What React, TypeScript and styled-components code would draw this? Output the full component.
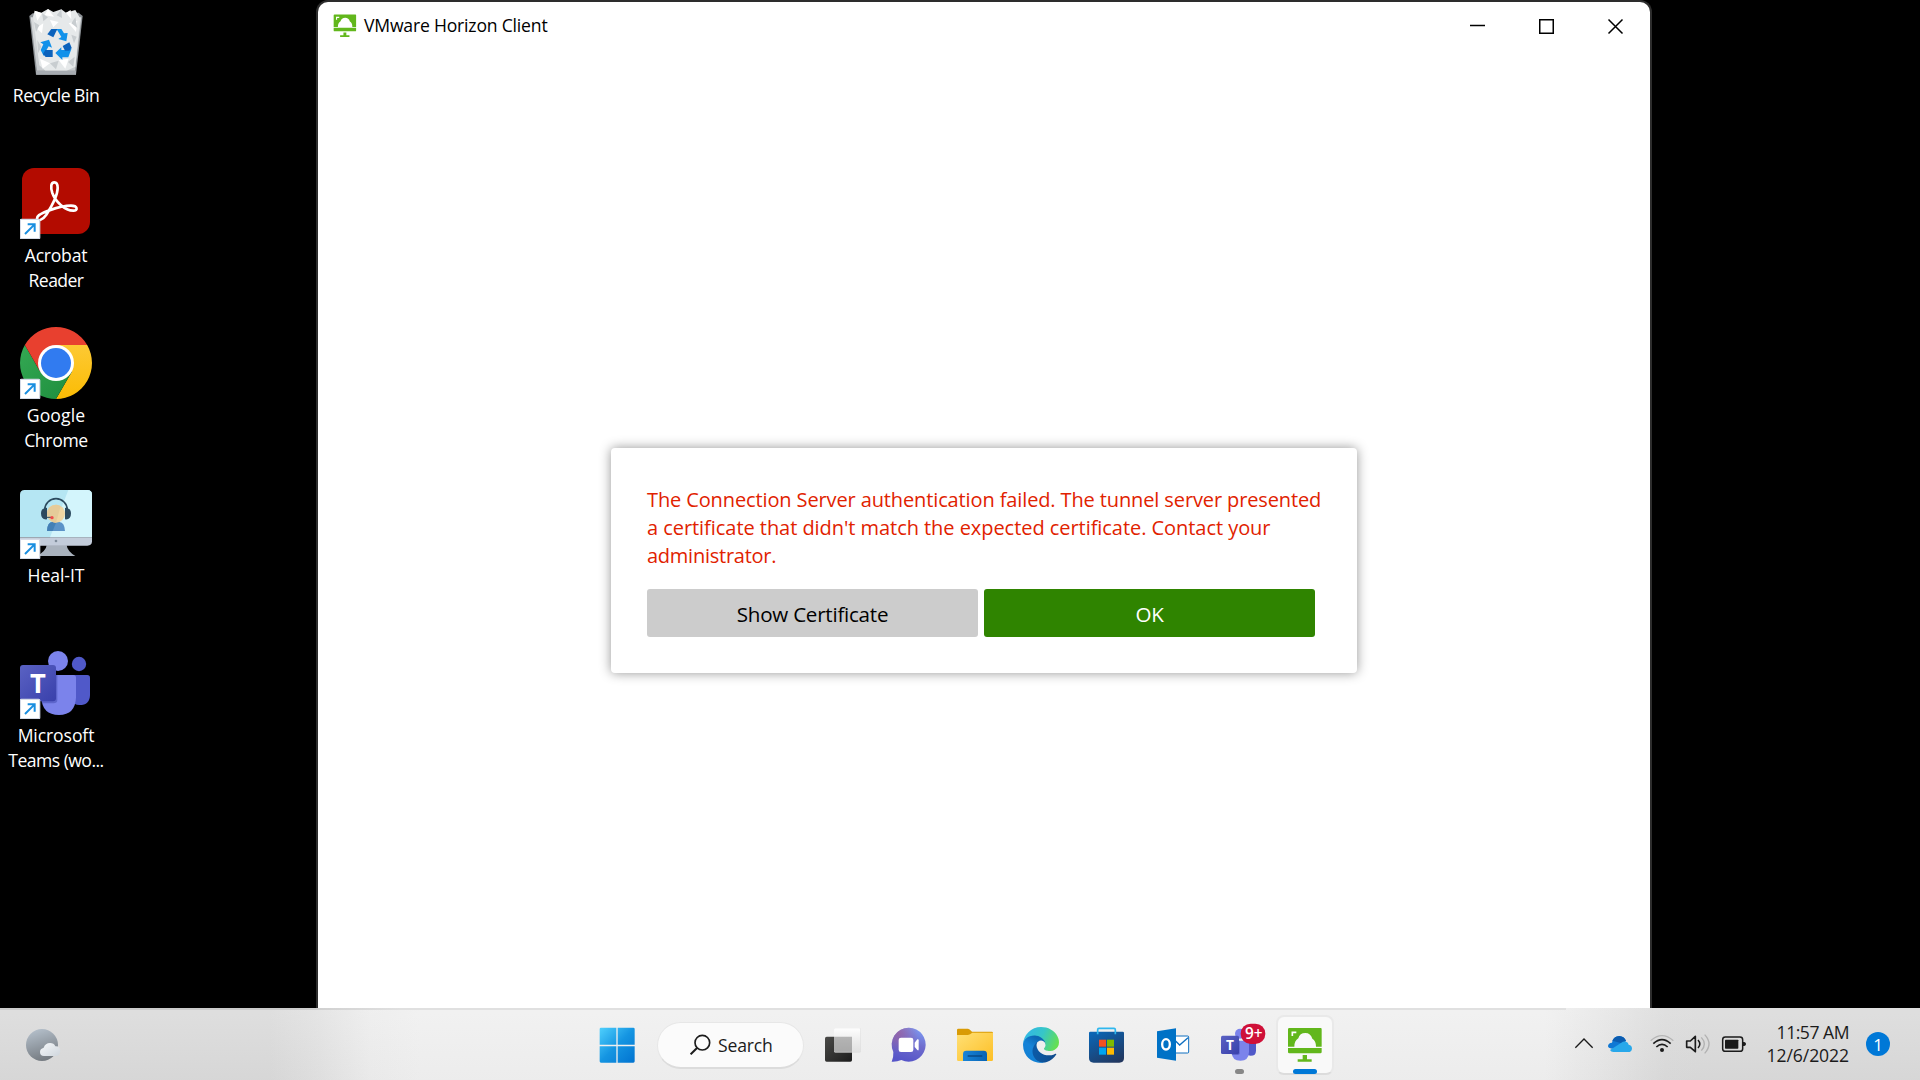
import React from 'react';
import styled, { createGlobalStyle } from 'styled-components';

const GlobalStyle = createGlobalStyle`
  *, *::before, *::after { box-sizing: border-box; }
  body { margin: 0; background: #000; overflow: hidden; }
  body, button { font-family: 'Open Sans', 'Noto Sans', sans-serif; }
  svg { display: block; }
`;

const Screen = styled.div`
  display: flex;
  flex-direction: column;
  width: 1920px;
  height: 1080px;
  background: #000;
`;

const Desktop = styled.main`
  display: flex;
  height: 1008px;
`;

const Shortcuts = styled.nav`
  display: grid;
  grid-auto-rows: 160px;
  align-content: start;
  width: 112px;
  margin-right: 204px;
`;

const Shortcut = styled.div`
  display: flex;
  flex-direction: column;
  align-items: center;
  padding-top: 7px;
`;

const ShortcutIcon = styled.svg`
  width: 72px;
  height: 72px;
  flex: none;
`;

const ShortcutLabel = styled.div`
  display: flex;
  flex-direction: column;
  align-items: center;
  margin-top: 4px;
`;

const LabelLine = styled.span<{ $spacing: number }>`
  font-size: 17.6px;
  line-height: 25px;
  letter-spacing: ${(p) => p.$spacing}px;
  color: #fff;
  white-space: nowrap;
`;

const Window = styled.section`
  display: flex;
  flex-direction: column;
  align-items: center;
  width: 1336px;
  height: 1008px;
  border: 2px solid #2d2d2d;
  border-bottom: 0;
  border-radius: 12px 12px 0 0;
  background: #fff;
`;

const TitleBar = styled.header`
  display: flex;
  align-items: center;
  align-self: stretch;
  height: 48px;
  padding-left: 15px;
`;

const TitleIcon = styled.svg`
  width: 24px;
  height: 24px;
`;

const Title = styled.span`
  flex: 1;
  margin: -2px 0 0 7px;
  font-size: 17.6px;
  letter-spacing: -0.2px;
  color: #000;
`;

const Caption = styled.svg`
  width: 69px;
  height: 48px;
`;

const Dialog = styled.div`
  width: 746px;
  height: 225px;
  margin-top: 398px;
  padding: 38px 42px 36px 36px;
  border-radius: 4px;
  background: #fff;
  box-shadow: 0 0 12px rgba(0, 0, 0, 0.42);
`;

const Message = styled.div`
  display: flex;
  flex-direction: column;
  align-items: flex-start;
`;

const MessageLine = styled.span<{ $spacing: number }>`
  font-size: 20px;
  line-height: 28px;
  letter-spacing: ${(p) => p.$spacing}px;
  color: #e12200;
  white-space: nowrap;
`;

const Actions = styled.div`
  display: grid;
  grid-template-columns: 331px 331px;
  column-gap: 6px;
  margin-top: 19px;
`;

const ActionButton = styled.button<{ $primary?: boolean }>`
  height: 48px;
  padding: 2px 0 0;
  border: 0;
  border-radius: 3px;
  font-size: 20.6px;
  letter-spacing: -0.25px;
  background: ${(p) => (p.$primary ? '#2f8400' : '#ccc')};
  color: ${(p) => (p.$primary ? '#fff' : '#000')};
`;

const Taskbar = styled.footer`
  display: grid;
  grid-template-columns: 584px 754px 1fr;
  height: 72px;
  background:
    linear-gradient(90deg, #cbcbcb 290px, #e0e0e0 400px, #e0e0e0 1566px, transparent 1566px) top / 100% 2px no-repeat,
    linear-gradient(180deg, rgba(255, 255, 255, 0.15), rgba(0, 0, 0, 0.012)),
    linear-gradient(90deg, #d9d9d9 270px, #e0e0e0 315px, #ececec 370px, #efefef 420px, #efefef 1545px, #e6e6e6 1600px, #dadada 1665px, #d9d9d9 1700px);
`;

const Weather = styled.svg`
  width: 36px;
  height: 36px;
  margin: 20px 0 0 25px;
`;

const Apps = styled.div`
  display: flex;
  align-items: center;
`;

const Slot = styled.div`
  display: flex;
  justify-content: center;
  width: 66px;
`;

const AppIcon = styled.svg`
  width: 36px;
  height: 36px;
  margin-top: 1px;
  overflow: visible;
`;

const BadgedIcon = styled.svg`
  width: 44px;
  height: 44px;
  margin: 1px 0 0 8px;
  overflow: visible;
`;

const ActiveTile = styled.div`
  display: flex;
  flex-direction: column;
  align-items: center;
  justify-content: space-between;
  width: 58px;
  height: 60px;
  margin-top: 2px;
  padding-top: 10px;
  border: 2px solid #e9e9e9;
  border-bottom-color: #dcdcdc;
  border-radius: 8px;
  background: #f9f9f9;
`;

const RunningTile = styled.div`
  display: flex;
  flex-direction: column;
  align-items: center;
  justify-content: space-between;
  height: 60px;
  margin-top: 2px;
  padding: 8px 0 1px;
`;

const Indicator = styled.i<{ $active?: boolean }>`
  width: ${(p) => (p.$active ? 24 : 9)}px;
  height: 5px;
  margin-bottom: ${(p) => (p.$active ? -1 : 0)}px;
  border-radius: 3px;
  background: ${(p) => (p.$active ? '#0078d7' : '#878787')};
`;

const SearchPill = styled.div`
  display: flex;
  align-items: center;
  width: 147px;
  height: 47px;
  margin: 2px 6px 0 7px;
  padding-left: 32px;
  border: 1px solid #e7e7e7;
  border-bottom: 2px solid #dcdcdc;
  border-radius: 24px;
  background: #fbfbfb;
`;

const SearchIcon = styled.svg`
  width: 22px;
  height: 22px;
`;

const SearchText = styled.span`
  margin: 1px 0 0 6px;
  font-size: 17.6px;
  letter-spacing: -0.2px;
  color: #1b1b1b;
`;

const Tray = styled.div`
  display: flex;
  align-items: center;
  justify-content: flex-end;
  padding-right: 30px;
`;

const TrayIcon = styled.svg<{ $gap: number }>`
  width: 24px;
  height: 24px;
  margin-right: ${(p) => p.$gap}px;
  overflow: visible;
`;

const Clock = styled.div`
  display: flex;
  flex-direction: column;
  align-items: flex-end;
  width: 103px;
  margin-right: 17px;
`;

const ClockLine = styled.span<{ $spacing: number }>`
  font-size: 17.6px;
  line-height: 23px;
  letter-spacing: ${(p) => p.$spacing}px;
  color: #1b1b1b;
`;

const Notice = styled.div`
  display: flex;
  align-items: center;
  justify-content: center;
  width: 24px;
  height: 24px;
  border-radius: 50%;
  font-size: 17px;
  background: #0078d7;
  color: #fff;
`;

const LinkArrow = () => (
  <g>
    <rect x="1" y="157" width="58" height="58" rx="3" fill="#fff" stroke="#d5dae6" strokeWidth="4" />
    <path d="M15 201 43 173M23 172H44V194" fill="none" stroke="#1a8ee0" strokeWidth="6" />
  </g>
);

const RecycleBinIcon = () => (
  <ShortcutIcon viewBox="60 21 216 216">
    <defs>
      <linearGradient id="bin" x1="0" x2="0" y1="0" y2="1">
        <stop offset="0" stopColor="#d9dcde" />
        <stop offset="1" stopColor="#c6cacd" />
      </linearGradient>
    </defs>
    <path d="M88 48 108 224H228L248 48 236 38 98 40Z" fill="#8f9498" />
    <path d="M92 52 111 212H225L244 52Z" fill="url(#bin)" />
    <path d="M99 50 104 32 124 38 144 27 160 36 184 28 198 38 226 30 240 54 226 200 200 212H136L118 196Z" fill="#e6e9ea" />
    <path d="M104 32 126 40 112 62ZM144 27 162 50 134 46ZM198 38 212 30 214 58ZM108 84 130 70 126 100ZM206 70 232 62 228 96ZM120 176 150 190 128 206ZM176 180 206 176 196 206ZM150 60 176 66 160 82Z" fill="#fff" />
    <path d="M126 40 144 52 130 64ZM184 28 186 54 170 46ZM226 52 232 84 214 70ZM112 120 124 140 114 160ZM150 190 176 182 168 208ZM204 186 224 170 220 200ZM102 66 118 76 108 96ZM214 104 230 110 222 130Z" fill="#c8cdd0" />
    <path d="M108 212H228V224H109Z" fill="#a6abb1" />
    <path d="M154 87H184L192 100 203 99 199 124 175 117 184 111 172 91Z" fill="#1191ea" />
    <path d="M154 87H172L160 112 142 103Z" fill="#0b62bc" />
    <path d="M121 127 147 119 156 143 146 139 136 156 131 168 122 150 130 133Z" fill="#1191ea" />
    <path d="M136 150H158V171H137L129 162Z" fill="#0b62bc" />
    <path d="M166 159 184 142V150H206L215 145 205 172H187V180Z" fill="#1191ea" />
    <path d="M188 138 208 127 215 143 208 152H195Z" fill="#0b62bc" />
  </ShortcutIcon>
);

const AcrobatIcon = () => (
  <ShortcutIcon viewBox="60 501 216 216">
    <rect x="66" y="504" width="204" height="198" rx="36" fill="#b30b00" />
    <path
      d="M163 547C153 547 151 560 157 579C166 604 194 632 220 632C235 632 233 617 213 617C181 617 110 640 111 655C112 666 128 660 139 644C155 619 173 590 173 564C173 552 169 547 163 547Z"
      fill="none"
      stroke="#fff"
      strokeWidth="8"
    />
    <g transform="translate(60 501)"><LinkArrow /></g>
  </ShortcutIcon>
);

const ChromeIcon = () => (
  <ShortcutIcon viewBox="60 51 216 216">
    <defs>
      <linearGradient id="cy" x1="0" x2="0" y1="0" y2="1">
        <stop offset="0" stopColor="#fdc934" />
        <stop offset="1" stopColor="#fbbc04" />
      </linearGradient>
      <linearGradient id="cg" x1="0" x2="1" y1="0" y2="1">
        <stop offset="0" stopColor="#34a853" />
        <stop offset="1" stopColor="#1e8e3e" />
      </linearGradient>
    </defs>
    <path d="M168 105H261.500A108 108 0 0 1 168 267L215 186Z" fill="url(#cy)" />
    <path d="M74.500 105A108 108 0 0 0 168 267L214.800 186 168 159 121 186Z" fill="url(#cg)" />
    <path d="M74.500 105A108 108 0 0 1 261.500 105H168L121.200 186Z" fill="#e8402f" />
    <circle cx="168" cy="159" r="54" fill="#fff" />
    <circle cx="168" cy="159" r="45" fill="#317bf0" />
    <g transform="translate(60 51)"><LinkArrow /></g>
  </ShortcutIcon>
);

const HealItIcon = () => (
  <ShortcutIcon viewBox="60 531 216 216">
    <path d="M140 706H200Q202 724 226 738H110Q138 724 140 706Z" fill="#a9b2bd" />
    <path d="M74 540H262Q276 540 276 554V682H60V554Q60 540 74 540Z" fill="#b5e6f3" />
    <path d="M205 540H262Q276 540 276 554V682H150Z" fill="#d3f5fc" />
    <path d="M60 682H276V694Q276 707 262 707H74Q60 707 60 694Z" fill="#c3ccda" />
    <circle cx="168" cy="693" r="4" fill="#7f8c9b" />
    <path d="M141 663Q142 636 158 636H178Q194 638 195 663Z" fill="#5b93c8" />
    <path d="M141 663Q142 636 158 636H169L158 663Z" fill="#4380b6" />
    <circle cx="168" cy="611" r="27" fill="#efd5a2" />
    <path d="M182 588A27 27 0 1 0 168 638Z" fill="#e5cb99" />
    <path d="M134 600A34 34 0 0 1 202 600" fill="none" stroke="#2c4a5e" strokeWidth="5" />
    <path d="M141 593V628Q123 630 123 610 123 594 141 593ZM195 593V628Q213 630 213 610 213 594 195 593Z" fill="#2c4a5e" />
    <path d="M138 622H154" stroke="#2c4a5e" strokeWidth="3" />
    <circle cx="156" cy="623" r="5" fill="#f04b4b" />
    <g transform="translate(60 531)"><LinkArrow /></g>
  </ShortcutIcon>
);

const TeamsShapes = ({ id }: { id: string }) => (
  <g>
    <defs>
      <linearGradient id={id} x1="0" x2="1" y1="0" y2="1">
        <stop offset="0" stopColor="#5a62c3" />
        <stop offset="1" stopColor="#3940ab" />
      </linearGradient>
    </defs>
    <circle cx="237" cy="192" r="21.500" fill="#5059c9" />
    <path d="M210 225H262Q270 225 270 233V284Q270 315 238 315 222 315 212 300Z" fill="#5059c9" />
    <circle cx="174" cy="183" r="30" fill="#7b83eb" />
    <path d="M126 225H220Q228 225 228 233V292Q226 345 177 345 126 345 124 292Z" fill="#7b83eb" />
    <path d="M126 225H172V300Q172 310 160 310H125Z" fill="#4a51b5" opacity="0.6" />
    <rect x="60" y="195" width="108" height="109" rx="9" fill={`url(#${id})`} />
    <text x="114" y="278" textAnchor="middle" fill="#fff" fontSize="82" fontWeight="700" fontFamily="Open Sans">T</text>
  </g>
);

const TeamsIcon = () => (
  <ShortcutIcon viewBox="60 141 216 216">
    <TeamsShapes id="teamsDesktop" />
    <g transform="translate(60 141)"><LinkArrow /></g>
  </ShortcutIcon>
);

const HorizonShapes = () => (
  <g>
    <path d="M1048 84H1142Q1145 84 1145 88V140H1128Q1128 122 1117 116 1112 99 1096 99 1079 99 1075 115 1063 122 1063 140H1044V88Q1044 84 1048 84Z" fill="#62b71c" />
    <path d="M1057 108V97H1069" fill="none" stroke="#fff" strokeWidth="5" />
    <path d="M1044 144H1145V156Q1145 160 1141 160H1048Q1044 160 1044 156ZM1088 165H1101V178H1115V185H1073V178H1088Z" fill="#62b71c" />
  </g>
);

const StartIcon = () => (
  <AppIcon viewBox="58 82 108 108">
    <defs>
      <linearGradient id="win" gradientUnits="userSpaceOnUse" x1="60" y1="84" x2="164" y2="189">
        <stop offset="0" stopColor="#4fd0fd" />
        <stop offset="0.5" stopColor="#1595e2" />
        <stop offset="1" stopColor="#0173d0" />
      </linearGradient>
    </defs>
    <path d="M64 84H110V135H60V88Q60 84 64 84ZM114 84H161Q165 84 165 88V135H114ZM60 140H110V189H64Q60 189 60 185ZM114 140H165V185Q165 189 161 189H114Z" fill="url(#win)" />
  </AppIcon>
);

const TaskViewIcon = () => (
  <AppIcon viewBox="735 82 108 108">
    <defs>
      <linearGradient id="tv" x1="0" x2="1" y1="0" y2="1">
        <stop offset="0" stopColor="#4a4a48" />
        <stop offset="1" stopColor="#1c1c1c" />
      </linearGradient>
      <linearGradient id="tvf" x1="0" x2="0" y1="0" y2="1">
        <stop offset="0" stopColor="#fff" stopOpacity="0.95" />
        <stop offset="1" stopColor="#e2e2e2" stopOpacity="0.75" />
      </linearGradient>
    </defs>
    <rect x="735" y="111" width="81" height="75" rx="5" fill="url(#tv)" />
    <rect x="762" y="86" width="81" height="73" rx="4" fill="#dcdcdc" opacity="0.8" />
    <rect x="762" y="86" width="79" height="70" rx="4" fill="url(#tvf)" />
    <path d="M762 111H816V156H766Q762 156 762 152Z" fill="#777" opacity="0.48" />
  </AppIcon>
);

const ChatIcon = () => (
  <AppIcon viewBox="931 82 108 108">
    <defs>
      <linearGradient id="chat" x1="0.8" x2="0.5" y1="0" y2="1">
        <stop offset="0" stopColor="#7d9df5" />
        <stop offset="0.5" stopColor="#6f6ccd" />
        <stop offset="1" stopColor="#5655c8" />
      </linearGradient>
      <radialGradient id="chatGlow" cx="0.2" cy="0.15" r="0.6">
        <stop offset="0" stopColor="#9d5c98" stopOpacity="0.75" />
        <stop offset="1" stopColor="#9d5c98" stopOpacity="0" />
      </radialGradient>
    </defs>
    <path d="M985 84A51 51 0 1 1 962 181Q948 187 933 186 939 174 938 157A51 51 0 0 1 985 84Z" fill="url(#chat)" />
    <path d="M985 84A51 51 0 1 1 962 181Q948 187 933 186 939 174 938 157A51 51 0 0 1 985 84Z" fill="url(#chatGlow)" />
    <rect x="954" y="114" width="44" height="43" rx="7" fill="#fff" />
    <path d="M1002 129 1010 119Q1014 117 1014 122V149Q1014 154 1010 151L1002 142Z" fill="#fff" />
  </AppIcon>
);

const FolderIcon = () => (
  <AppIcon viewBox="51 82 108 108">
    <defs>
      <linearGradient id="fold" x1="0" x2="1" y1="0" y2="1">
        <stop offset="0" stopColor="#ffe076" />
        <stop offset="1" stopColor="#fdbf25" />
      </linearGradient>
      <linearGradient id="foldBlue" x1="0" x2="1" y1="0" y2="0">
        <stop offset="0" stopColor="#1a85d8" />
        <stop offset="1" stopColor="#0863b4" />
      </linearGradient>
    </defs>
    <path d="M55 87H84Q88 87 96 96H155Q159 96 159 100V130H51V91Q51 87 55 87Z" fill="#d99b05" />
    <path d="M51 106H84Q90 105 97 99H159V180Q159 184 155 184H55Q51 184 51 180Z" fill="url(#fold)" />
    <path d="M69 184V163Q69 153 79 153H131Q141 153 141 163V184Z" fill="url(#foldBlue)" />
    <path d="M83 169H127" stroke="#08457f" strokeWidth="4" />
  </AppIcon>
);

const EdgeIcon = () => (
  <AppIcon viewBox="0 0 256 256">
    <defs>
      <linearGradient id="e1" x1="0.2" x2="1" y1="0.5" y2="0.6">
        <stop offset="0" stopColor="#0c59a4" />
        <stop offset="1" stopColor="#114a8b" />
      </linearGradient>
      <linearGradient id="e2" x1="0.7" x2="0.3" y1="0.2" y2="1">
        <stop offset="0" stopColor="#0d68b4" />
        <stop offset="0.4" stopColor="#1583d8" />
        <stop offset="1" stopColor="#1180d3" />
      </linearGradient>
      <linearGradient id="e3" x1="0" x2="1" y1="0.3" y2="0.6">
        <stop offset="0" stopColor="#33b7e8" />
        <stop offset="0.5" stopColor="#36c6c8" />
        <stop offset="1" stopColor="#66e04f" />
      </linearGradient>
    </defs>
    <path fill="url(#e1)" d="M231 190.500c-3.400 1.800-6.900 3.400-10.500 4.700a101.500 101.500 0 0 1-35.900 6.500c-47.300 0-88.500-32.500-88.500-74.300a31.500 31.500 0 0 1 16.400-27.300c-42.800 1.800-53.800 46.400-53.800 72.500 0 73.900 68.100 81.400 82.800 81.400 7.900 0 19.800-2.300 27-4.600l1.300-.4a128 128 0 0 0 66.600-52.800 4 4 0 0 0-5.400-5.700z" />
    <path fill="url(#e2)" d="M105.700 241.400a79.200 79.200 0 0 1-22.700-21.300 80.700 80.700 0 0 1 29.500-120c3.200-1.500 8.500-4.100 15.600-4a32.400 32.400 0 0 1 25.700 13 31.900 31.900 0 0 1 6.300 18.700c0-.2 24.500-79.600-80-79.600-43.900 0-80 41.700-80 78.200a130.200 130.200 0 0 0 12.100 56 128 128 0 0 0 156.400 67 75.500 75.500 0 0 1-62.800-8z" />
    <path fill="url(#e3)" d="M152.300 148.900c-.9 1-3.400 2.500-3.400 5.600 0 2.600 1.700 5.200 4.800 7.300 14.300 10 41.400 8.600 41.500 8.600a59.600 59.600 0 0 0 30.300-8.300 61.400 61.400 0 0 0 30.400-52.900c.3-22.400-8-37.300-11.300-43.900C223.500 23.900 177.700 0 128 0A128 128 0 0 0 0 126.200c.5-36.500 36.800-66 80-66 3.500 0 23.500.3 42 10.100 16.300 8.600 24.900 18.900 30.800 29.200 6.200 10.700 7.300 24.100 7.300 29.500s-2.700 13.300-7.800 19.900z" />
  </AppIcon>
);

const StoreIcon = () => (
  <AppIcon viewBox="447 82 108 108">
    <defs>
      <linearGradient id="store" x1="0.2" x2="0.8" y1="0" y2="1">
        <stop offset="0" stopColor="#0b65b4" />
        <stop offset="1" stopColor="#22375f" />
      </linearGradient>
    </defs>
    <path d="M451 96H548Q552 96 552 100V175Q552 189 538 189H461Q447 189 447 175V100Q447 96 451 96Z" fill="url(#store)" />
    <path d="M473 104V90Q473 86 477 86H522Q526 86 526 90V104" fill="none" stroke="#2fb7ee" strokeWidth="5" />
    <path d="M477 120H498V141H477Z" fill="#f25022" />
    <path d="M501 120H522V141H501Z" fill="#7fba00" />
    <path d="M477 144H498V165H477Z" fill="#00a4ef" />
    <path d="M501 144H522V165H501Z" fill="#ffb900" />
  </AppIcon>
);

const OutlookIcon = () => (
  <AppIcon viewBox="645 82 108 108">
    <path d="M700 109H743Q746 109 746 112V157Q746 160 743 160H700Z" fill="#fff" stroke="#0f6fc0" strokeWidth="3" />
    <path d="M706 123 719 136 744 114" fill="none" stroke="#0f6fc0" strokeWidth="4" />
    <path d="M651 95 708 86V183L651 174Z" fill="#0072c6" />
    <ellipse cx="678" cy="134" rx="11.500" ry="15.500" fill="none" stroke="#fff" strokeWidth="7" />
  </AppIcon>
);

const TeamsTaskIcon = () => (
  <BadgedIcon viewBox="843 72 132 132">
    <g transform="translate(843 85) scale(0.5) translate(-60 -150)">
      <TeamsShapes id="teamsTask" />
    </g>
    <rect x="902" y="71" width="74" height="61" rx="30" fill="#cf1038" />
    <text x="941" y="117" textAnchor="middle" fill="#fff" fontSize="46" fontWeight="600" fontFamily="Open Sans">9+</text>
  </BadgedIcon>
);

const shortcuts: { icon: React.ReactNode; lines: [string, number][] }[] = [
  { icon: <RecycleBinIcon />, lines: [['Recycle Bin', -0.5]] },
  { icon: <AcrobatIcon />, lines: [['Acrobat', -0.25], ['Reader', -0.6]] },
  { icon: <ChromeIcon />, lines: [['Google', 0.1], ['Chrome', -0.35]] },
  { icon: <HealItIcon />, lines: [['Heal-IT', -0.05]] },
  { icon: <TeamsIcon />, lines: [['Microsoft', -0.1], ['Teams (wo...', -0.55]] },
];

const message: [string, number][] = [
  ['The Connection Server authentication failed. The tunnel server presented', -0.12],
  ["a certificate that didn't match the expected certificate. Contact your", -0.05],
  ['administrator.', -0.25],
];

export default function App() {
  return (
    <Screen>
      <GlobalStyle />
      <Desktop>
        <Shortcuts>
          {shortcuts.map((s, i) => (
            <Shortcut key={i}>
              {s.icon}
              <ShortcutLabel>
                {s.lines.map(([text, spacing]) => (
                  <LabelLine key={text} $spacing={spacing}>{text}</LabelLine>
                ))}
              </ShortcutLabel>
            </Shortcut>
          ))}
        </Shortcuts>
        <Window>
          <TitleBar>
            <TitleIcon viewBox="1041 82 108 108"><HorizonShapes /></TitleIcon>
            <Title>VMware Horizon Client</Title>
            <Caption viewBox="0 0 69 48"><path d="M27 23.500H42" stroke="#000" strokeWidth="1.500" /></Caption>
            <Caption viewBox="0 0 69 48"><rect x="27.750" y="17.750" width="13.500" height="13.500" fill="none" stroke="#000" strokeWidth="1.500" /></Caption>
            <Caption viewBox="0 0 69 48"><path d="M27.500 17.500 41.500 31.500M41.500 17.500 27.500 31.500" stroke="#000" strokeWidth="1.500" /></Caption>
          </TitleBar>
          <Dialog>
            <Message>
              {message.map(([text, spacing]) => (
                <MessageLine key={text} $spacing={spacing}>{text}</MessageLine>
              ))}
            </Message>
            <Actions>
              <ActionButton>Show Certificate</ActionButton>
              <ActionButton $primary>OK</ActionButton>
            </Actions>
          </Dialog>
        </Window>
      </Desktop>
      <Taskbar>
        <Weather viewBox="75 144 108 108">
          <defs>
            <linearGradient id="moon" x1="0.3" x2="0.6" y1="0" y2="1">
              <stop offset="0" stopColor="#b4bfca" />
              <stop offset="1" stopColor="#73797f" />
            </linearGradient>
            <linearGradient id="mist" x1="0" x2="1" y1="0" y2="1">
              <stop offset="0" stopColor="#f6f8fa" />
              <stop offset="1" stopColor="#cfd6dd" />
            </linearGradient>
          </defs>
          <circle cx="126" cy="195" r="48" fill="url(#moon)" />
          <path d="M132 228Q120 228 120 216 120 206 131 203 136 189 150 189 162 189 166 199 181 198 181 213 180 228 166 228Z" fill="url(#mist)" />
        </Weather>
        <Apps>
          <Slot><StartIcon /></Slot>
          <SearchPill>
            <SearchIcon viewBox="329 102 66 66">
              <circle cx="366" cy="128" r="22" fill="none" stroke="#1b1b1b" strokeWidth="5" />
              <path d="M350 144 331 163" stroke="#1b1b1b" strokeWidth="6" />
            </SearchIcon>
            <SearchText>Search</SearchText>
          </SearchPill>
          <Slot><TaskViewIcon /></Slot>
          <Slot><ChatIcon /></Slot>
          <Slot><FolderIcon /></Slot>
          <Slot><EdgeIcon /></Slot>
          <Slot><StoreIcon /></Slot>
          <Slot><OutlookIcon /></Slot>
          <Slot><RunningTile><TeamsTaskIcon /><Indicator /></RunningTile></Slot>
          <Slot><ActiveTile><AppIcon viewBox="1041 84 108 108"><HorizonShapes /></AppIcon><Indicator $active /></ActiveTile></Slot>
        </Apps>
        <Tray>
          <TrayIcon $gap={12} viewBox="96 96 72 72"><path d="M106 143 132 117 158 143" fill="none" stroke="#1b1b1b" strokeWidth="4" /></TrayIcon>
          <TrayIcon $gap={18} viewBox="204 96 72 72">
            <path d="M216 128Q219 109 238 108 252 109 258 122L240 146H216Q204 145 204 138 205 129 216 128Z" fill="#0f78d4" />
            <path d="M217 122Q224 109 238 108 252 109 258 122L245 130Z" fill="#0b5cb0" />
            <path d="M210 150 244 128Q250 123 258 125 265 127 266 134 276 136 276 146 275 156 264 156H220Q213 156 210 150Z" fill="#28a8ea" />
          </TrayIcon>
          <TrayIcon $gap={12} viewBox="330 96 72 72">
            <path d="M332 122Q366 92 400 122" fill="none" stroke="#b5b5b5" strokeWidth="4" />
            <path d="M340 131Q366 107 392 131M349 141Q366 125 383 141" fill="none" stroke="#1b1b1b" strokeWidth="5" />
            <circle cx="366" cy="150" r="6" fill="#1b1b1b" />
          </TrayIcon>
          <TrayIcon $gap={12} viewBox="438 96 72 72">
            <path d="M440 123H451L466 109V155L451 142H440Z" fill="none" stroke="#1b1b1b" strokeWidth="5" strokeLinejoin="round" />
            <path d="M474 120Q485 132 474 144" fill="none" stroke="#1b1b1b" strokeWidth="4.500" />
            <path d="M484 112Q502 132 484 152M494 104Q520 132 494 160" fill="none" stroke="#b2b2b2" strokeWidth="4" />
          </TrayIcon>
          <TrayIcon $gap={0} viewBox="546 96 72 72">
            <rect x="548" y="111" width="60" height="43" rx="8" fill="none" stroke="#1b1b1b" strokeWidth="4.500" />
            <rect x="555" y="119" width="40" height="27" rx="2" fill="#1b1b1b" />
            <path d="M609 126H613Q618 127 618 132 618 137 613 138H609Z" fill="#1b1b1b" />
          </TrayIcon>
          <Clock>
            <ClockLine $spacing={-0.5}>11:57 AM</ClockLine>
            <ClockLine $spacing={-0.1}>12/6/2022</ClockLine>
          </Clock>
          <Notice>1</Notice>
        </Tray>
      </Taskbar>
    </Screen>
  );
}
